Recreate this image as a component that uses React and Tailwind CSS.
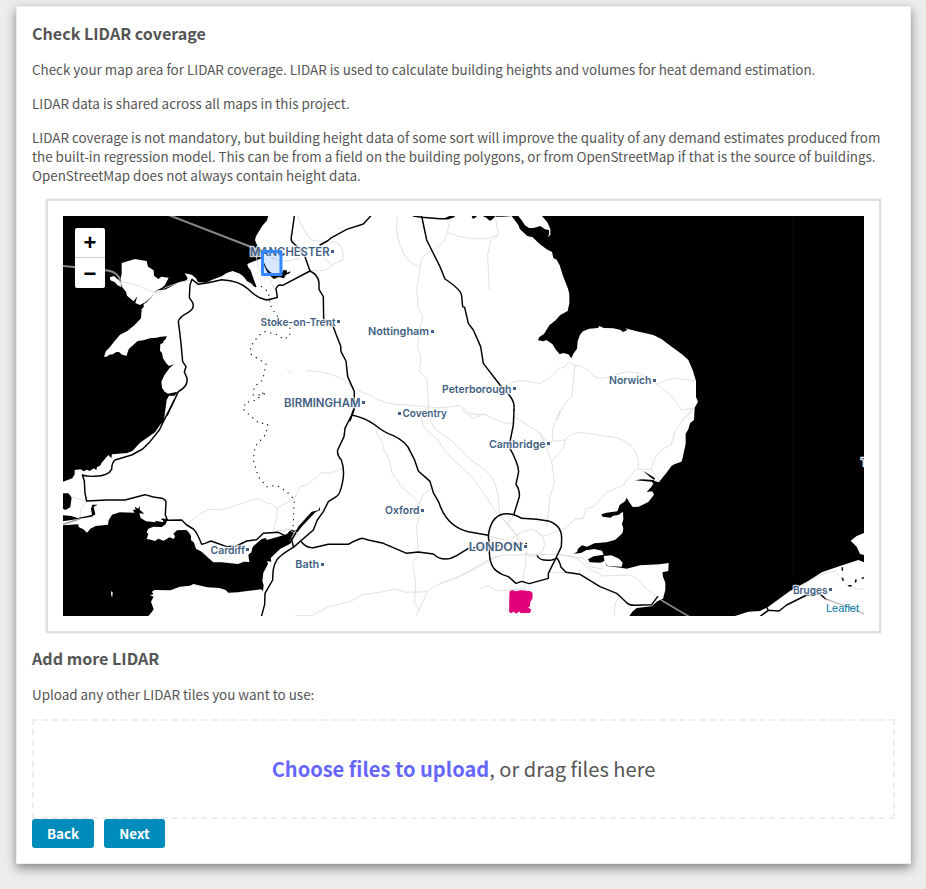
const PLACES = [
  { name: "MANCHESTER", x: 250, y: 255.7, w: 79.5, size: 11.5, dot: [332.5, 251.5] },
  { name: "Stoke-on-Trent", x: 260.5, y: 325.7, w: 75, size: 10.8, dot: [338.5, 321.5] },
  { name: "Nottingham", x: 368, y: 335.3, w: 61, size: 10.8, dot: [432.5, 331.5] },
  { name: "Peterborough", x: 442, y: 392.5, w: 69.5, size: 10.8, dot: [514.5, 388.5] },
  { name: "Norwich", x: 609, y: 384, w: 42.5, size: 10.8, dot: [654.5, 380.5] },
  { name: "BIRMINGHAM", x: 284, y: 406.7, w: 76.5, size: 11.5, dot: [363.5, 402.5] },
  { name: "Coventry", x: 402.5, y: 417.3, w: 44.5, size: 10.8, dot: [399.5, 413.5] },
  { name: "Cambridge", x: 489, y: 447.5, w: 56.5, size: 10.8, dot: [548.5, 443.5] },
  { name: "Oxford", x: 385, y: 514.3, w: 34.5, size: 10.8, dot: [422.5, 510.5] },
  { name: "Bath", x: 295.3, y: 568.3, w: 24, size: 10.8, dot: [322.5, 564.5] },
  { name: "Cardiff", x: 210.5, y: 554, w: 34.5, size: 10.8, dot: [247.5, 549.5] },
  { name: "LONDON", x: 468.8, y: 550.7, w: 53.5, size: 12, dot: [525.5, 546.5] },
  { name: "Bruges", x: 793, y: 593.7, w: 34.5, size: 10.8, dot: [830.5, 589.5] },
];

const FRAME = {
  walesNorth: "translate(40 195) scale(.333333)",
  walesSouth: "translate(40 400) scale(.333333)",
  midlands: "translate(240 210) scale(.333333)",
  southWest: "translate(240 410) scale(.333333)",
  east: "translate(440 210) scale(.333333)",
  southEast: "translate(440 410) scale(.333333)",
  flanders: "translate(680 430) scale(.333333)",
};

function Sea() {
  return (
    <g fill="#000">
      <g transform={FRAME.walesNorth}>
        <path d="M69 63H685L680 78 667 92 648 124 645 135 652 152 666 166 663 190 655 194 638 200 622 207 624 216 632 226 640 250 650 276 645 277 632 264 621 259 612 246 600 236 578 228 560 234 545 244 515 255 500 263 474 262 468 250 455 239 434 235 443 249 440 256 413 263 398 272 374 284 353 286 341 296 335 306 320 322 311 327 311 336 305 342 303 370 293 380 284 390 262 408 240 419 222 440 208 458 198 468 192 485 200 485 208 479 218 478 229 471 237 471 246 479 260 482 264 468 267 461 283 447 293 438 310 436 330 430 350 428 362 425 381 424 375 435 370 437 370 443 361 448 360 467 366 474 369 490 380 506 387 513 402 508 388 520 373 541 364 560 366 578 374 590 384 596 413 590 404 602 387 602 380 615 374 660 372 678 360 690 345 712 300 743 278 767 262 774 216 778 214 790 205 780 185 803 180 812 171 816 169 826 162 820 149 828 141 824 130 829 123 823 104 825 104 838 97 850 69 860Z" />
        <path fill="#fff" d="M245 204 275 195 285 192 301 195 320 198 324 215 341 226 342 242 355 252 364 245 386 248 375 270 365 279 350 286 335 305 318 320 300 330 286 324 292 304 281 319 261 302 258 290 248 278 240 260 245 236Z" />
        <path fill="#fff" d="M210 247 222 243 232 252 241 259 244 277 231 269 225 262 211 256Z" />
        <path d="M669 190Q674 223 700 238L722 237 731 225 740 226 741 233 751 229 750 234 737 240 732 250 716 246 702 252 688 241Q672 219 666 190Z" />
      </g>
      <g transform={FRAME.walesSouth}>
        <path d="M69 280 85 280 95 292 91 322 76 330 69 326ZM69 346 94 348 112 354 156 345 153 326 157 314 174 314 161 320 166 343 155 350 118 356 69 364Z" />
        <path d="M69 376 115 373 116 381 130 388 141 398 151 386 167 378 204 374 206 361 216 344 239 337 284 338 278 329 287 329 284 320 294 326 300 318 299 329 313 341 298 340 302 354 318 364 348 367 345 362 370 367 368 356 382 361 377 373 365 381 340 380 325 386 320 397 325 402 320 417 332 419 345 423 355 416 371 422 389 412 401 417 405 409 400 401 411 391 439 390 446 397 453 408 453 420 462 428 468 446 485 455 502 471 520 487 545 487 594 492 612 485 628 486 625 464 634 457 638 441 655 425 665 417 678 414 680 420 715 410 741 402 753 388 768 392 776 378 815 335 835 331 840 320 840 331 826 337 787 378 770 400 758 419 751 431 721 446 692 474 694 485 681 484 684 492 670 518 667 544 671 555 669 574 664 568 603 575 595 577 565 578 557 570 538 564 502 562 460 552 450 557 420 560 391 571 343 570 335 576 341 582 330 586 341 590 333 605 341 628 335 637 325 648 69 648Z" />
        <path fill="#fff" d="M213 574 218 577 217 591 214 588Z" />
      </g>
      <g transform={FRAME.east}>
        <path d="M215 18 235 45 240 58 262 78 278 82 298 101 320 118 336 126 340 144 350 149 359 166 368 195 384 236 388 253 388 280 383 303 360 316 347 331 328 346 312 372 298 381 294 391 311 394 319 390 337 402 346 417 359 433 369 429 385 433 394 445 401 430 411 416 413 394 420 374 429 364 448 356 474 354 478 348 491 354 520 355 542 360 549 366 562 360 556 355 587 363 640 375 664 387 696 411 726 433 745 450 758 480 768 513 768 561 774 575 764 593 762 630 750 640 745 658 737 671 737 701 727 748 724 755 705 762 695 767 679 789 656 817 642 812 645 804 609 782 630 801 643 810 605 808 585 811 635 815 640 821 632 833 620 846 637 844 642 854 625 876 596 890 578 891 568 877 560 863 555 874 539 885 532 904 500 908 484 913 488 920 512 923 519 917 535 915 549 905 550 928 546 942 550 955 547 970 526 989 500 997 463 1000 441 1010 426 1006 414 1016 411 1026 400 1031 423 1029 438 1021 463 1017 486 1022 491 1034 461 1039 444 1048 449 1057 482 1058 494 1052 500 1068 543 1073 560 1076 600 1066 659 1063 686 1059 685 1083 667 1087 669 1100 676 1118 676 1140 669 1166 652 1174 635 1189 590 1194 577 1205 568 1218 885 1218 925 1205 960 1203 985 1190 1050 1143 1110 1110 1145 1087 1200 1068 1255 1050 1272 1057V1035L1260 1032 1250 1010 1232 992 1250 978 1272 969V18Z" />
        <path fill="#fff" d="M235 18 245 31 255 46 267 54 281 54 301 48 315 58 327 60 327 74 322 82 331 75 331 57 322 37 306 18ZM491 1038 514 1036 537 1046 548 1058 545 1070 503 1068 494 1057Z" />
        <path d="M0 26 25 27 43 18 28 18 15 24 0 24ZM95 18 111 18 105 24 98 26ZM128 18 220 18 185 20 165 20 155 30 149 32 139 23Z" />
      </g>
    </g>
  );
}

function MinorRoads() {
  return (
    <g fill="none" stroke="#dadada" strokeWidth="2.5" strokeLinejoin="round">
      <g transform={FRAME.walesNorth}>
        <path d="M243 262Q280 262 320 283T375 278L420 262 455 255M740 521 747 526 753 536" />
        <path d="M648 178 655 220 690 255 705 285M670 165Q690 198 740 198L780 190" />
      </g>
      <g transform={FRAME.walesSouth}>
        <path d="M92 290 140 304Q118 325 121 350M440 375 475 345 505 328 545 330 625 304 655 295 680 310 695 312 712 325 765 293 780 260M712 325 711 345 701 392M700 395 745 388 765 400" />
        <path stroke="#999" strokeWidth="5" d="M69 373 120 356" />
      </g>
      <g transform={FRAME.midlands}>
        <path d="M173 18Q190 65 215 90L255 96 285 96Q315 105 308 150L275 165 240 130M275 165Q260 190 210 180M268 96 268 78M473 18Q465 65 480 105 500 160 535 168M570 125Q540 138 540 175L530 240 535 295 548 320 535 380 533 415 543 440 538 485Q555 500 562 510L566 620M630 28 622 68Q615 105 570 125M198 482Q255 482 310 508 350 545 390 555 430 585 500 585L600 594 660 587 690 612 740 614" />
        <path d="M622 68Q675 90 745 86L775 75 766 18M775 75 752 93 743 135 748 240" />
      </g>
      <g transform={FRAME.southWest}>
        <path d="M128 368Q150 345 172 370L185 395M165 365 150 392M165 617H215L265 590 330 575 365 555 430 545 465 537 500 547 562 545M180 230 200 225 245 188 270 190 310 173M402 25 410 70 427 98 430 115 450 155 455 187 485 230 520 260 540 285 541 310 530 350 535 430 518 460 527 520 523 580 537 597 530 617M540 285Q540 250 575 237M537 600 562 545Q580 525 645 505L700 480 780 435M548 0Q530 50 590 85L620 130 700 205 775 315M570 0Q560 45 610 75L655 110 680 140 735 180Q780 215 778 310M565 0 550 25" />
      </g>
      <g transform={FRAME.east}>
        <path d="M200 540Q210 510 250 512L300 520Q335 505 355 475L372 472 385 457 405 465Q440 470 460 498 480 515 540 490 575 480 610 495L650 522Q680 505 710 505L765 513M650 522 695 558 725 600 760 595Q745 620 725 635M405 465 395 560Q365 585 352 630" />
      </g>
      <g transform={FRAME.southEast}>
        <path d="M65 0 100 25 130 12 190 38 222 40M222 20 300 70 335 155 343 220 330 260 320 350M300 70 320 95 376 90 370 115 335 155M360 0 338 55 338 90M376 90Q390 65 425 68L525 82Q585 97 595 150V177M754 0 735 20 705 65 693 105Q645 120 633 178L660 215M633 178 590 178Q565 200 550 225L500 248 460 290 438 295 430 325 405 328 375 355 305 380 295 370M145 377 220 397M180 305Q185 330 240 385M235 395Q220 350 190 330M222 312 205 340M215 400Q205 375 275 358 315 370 313 405 310 440 270 440M120 535 145 527 170 542 250 537M270 440 258 425 257 465 250 500 255 540M0 520Q50 508 100 475T190 435L350 433Q405 435 430 460L450 478 490 498 570 495Q600 505 610 530L650 558M330 487H380M350 433 430 445 450 470 490 478M525 618Q518 585 535 565M225 605 235 618" />
      </g>
      <g transform={FRAME.flanders}>
        <path d="M365 470Q410 430 465 423L490 452Q510 480 552 478" />
      </g>
    </g>
  );
}

function MainRoads() {
  return (
    <g fill="none" stroke="#000" strokeWidth="4.4" strokeLinejoin="round" strokeLinecap="round">
      <g transform={FRAME.walesNorth}>
        <path d="M382 660 415 590Q445 573 441 550L433 530 438 515 428 500 423 445 419 410 415 380Q417 366 445 352 465 340 458 323L448 308 450 270 456 253 475 268 505 263 545 254Q600 257 625 283T680 315L706 309 712 307 708 280 715 271 728 271 810 228" />
      </g>
      <g transform={FRAME.walesSouth}>
        <path d="M403 0 370 65 358 90 330 125 308 147 275 165 225 180Q215 188 215 208 205 227 165 229 140 230 127 225L133 243 135 280 140 303 200 300 255 300 315 284 340 291 365 295Q377 298 378 307L376 345 382 359 366 358M382 361 425 360 440 375 460 387Q470 395 485 433L495 430 513 423 560 440 590 438 620 423 650 419 670 400 715 397 740 410 755 418 760 440" />
      </g>
      <g transform={FRAME.midlands}>
        <path d="M163 18 155 75Q150 95 162 101L177 115 195 140 210 183Q235 195 237 218L237 238 250 260 251 328 280 350 289 375 302 408 303 425 318 453 323 500 343 545 342 600 330 632M392 18 370 42 320 58 275 83 262 93 240 105M520 18 545 22 600 26 625 26 642 20M545 18 560 90 600 170 615 207Q665 240 665 258L668 290 674 292 685 340 700 360 722 410 730 460 780 525Q820 563 822 585V600" />
      </g>
      <g transform={FRAME.southWest}>
        <path d="M340 0 335 15 315 55 312 80 293 120Q290 135 304 150 315 180 308 215 300 255 290 259L265 275 250 305 232 330 220 360 160 412Q112 440 108 455 98 470 98 510L75 550 74 583 65 617M335 15Q375 23 405 45 430 66 460 77 500 95 511 125L523 148 535 183 570 214 580 248 597 278Q620 350 685 365L745 376M185 397Q200 415 220 413L265 403 325 403Q355 386 368 385L385 390 430 400 500 430 535 426 580 432Q610 460 650 437L685 415" />
        <path strokeDasharray="2 10" d="M690 414 865 400" />
      </g>
      <g transform={FRAME.southEast}>
        <path d="M222 0 220 45 207 110Q235 160 236 185L228 223Q240 240 238 260L222 312M145 377Q152 320 190 312 215 308 245 325L290 328 325 333Q365 345 365 385L364 410 345 450 325 490 325 505L268 521 245 514 228 520 205 500Q160 487 153 458 147 440 148 410L145 377M292 438Q300 454 335 450L352 445Q362 462 362 470L378 487 420 493 480 530 530 550 558 576Q565 586 585 586L635 584 653 560" />
        <path stroke="#888" strokeWidth="5" strokeLinecap="butt" d="M663 570 748 620" />
      </g>
      <g transform={FRAME.flanders}>
        <path d="M242 558 265 541 297 543 320 525 380 495 420 492 437 507M258 528 265 541" />
        <path stroke="#999" d="M437 507 515 535 555 553" />
        <path strokeDasharray="10 20" strokeLinecap="butt" d="M487 412 487 425M487 443 490 453M528 448 526 461M505 467 515 467M545 445 552 443" />
      </g>
      <g transform={FRAME.walesNorth} stroke="#888" strokeWidth="6" strokeLinecap="butt">
        <path d="M388 61 652 163M69 213 110 217M193 226Q235 228 242 261" />
      </g>
    </g>
  );
}

function Borders() {
  return (
    <g fill="none" stroke="#111" strokeWidth="4" strokeLinecap="round" strokeDasharray=".1 17.5">
      <g transform={FRAME.midlands}>
        <path d="M65 230 85 245 90 283 108 315 150 353 149 378 131 388 112 374 75 365 55 377 32 410V432L78 462 68 510 43 530 40 555 72 555 74 543 50 570 15 578 13 600" />
      </g>
      <g transform={FRAME.southWest}>
        <path d="M12 0 55 38 83 42 78 72 45 110 40 150 55 200 80 230 110 226 140 245 163 268 159 360" />
      </g>
    </g>
  );
}

function CoverageMap() {
  return (
    <div className="relative h-[400px] w-[801px] overflow-hidden bg-white">
      <svg className="block h-full w-full" viewBox="63 216 801 400">
        <Sea />
        <MinorRoads />
        <MainRoads />
        <Borders />
        <path stroke="#060606" d="M792.5 216V578" />
        <g
          fontFamily="Inter, 'Open Sans', sans-serif"
          fontWeight="600"
          fill="#435f83"
          stroke="#fff"
          strokeOpacity=".8"
          strokeWidth="2.4"
          strokeLinejoin="round"
          paintOrder="stroke"
        >
          {PLACES.map((p) => (
            <g key={p.name}>
              <text x={p.x} y={p.y} fontSize={p.size} textLength={p.w} lengthAdjust="spacingAndGlyphs">
                {p.name}
              </text>
              <rect x={p.dot[0] - 1.5} y={p.dot[1] - 1.5} width="3" height="3" />
            </g>
          ))}
          <text x="861" y="466" fontSize="10.5" strokeOpacity="1">T</text>
        </g>
        <rect x="262.5" y="251.5" width="18.5" height="23" fill="#3388ff" fillOpacity=".2" stroke="#3388ff" strokeWidth="3" strokeLinejoin="round" />
        <path
          transform={FRAME.southEast}
          fill="#e0007a"
          stroke="#e0007a"
          strokeWidth="3"
          strokeLinejoin="round"
          d="M210 544 220 542 226 545 244 542 270 545 276 548 276 565 270 575 268 589 262 594 271 598 270 607 242 608 238 602 232 608 225 608 220 602 216 608 209 606Z"
        />
      </svg>
      <div className="absolute top-3 left-3 flex w-[30px] flex-col overflow-hidden rounded-[2px] bg-white font-['Liberation_Sans',sans-serif] text-[22px] font-bold text-black">
        <button className="h-[30px] border-b border-[#ccc] leading-[29px]">+</button>
        <button className="h-[30px] leading-[29px]">−</button>
      </div>
      <div className="absolute right-0 bottom-0 bg-white/40 px-[5px] font-['Liberation_Sans',sans-serif] text-[11px] leading-4 text-[#0078a8]">
        Leaflet
      </div>
    </div>
  );
}

export default function App() {
  return (
    <div className="h-[889px] overflow-hidden bg-[#ededed] px-4 pt-1.5 font-['Noto_Sans_CJK_SC',sans-serif] text-[13.42px] leading-[19px] text-[#555]">
      <main className="h-[858px] w-[895px] border border-[#eee] bg-white px-[15px] pt-[15px] shadow-[0_4px_10px_rgba(0,0,0,0.45)]">
        <h2 className="mb-[15px] h-[23px] text-[16.08px] leading-[23px] font-bold">Check LIDAR coverage</h2>
        <p className="mb-[15px] whitespace-nowrap">
          Check your map area for LIDAR coverage. LIDAR is used to calculate building heights and volumes for heat demand estimation.
        </p>
        <p className="mb-[15px]">LIDAR data is shared across all maps in this project.</p>
        <p className="mb-3.5 whitespace-nowrap">
          LIDAR coverage is not mandatory, but building height data of some sort will improve the quality of any demand estimates produced from
          <br />
          the built-in regression model. This can be from a field on the building polygons, or from OpenStreetMap if that is the source of buildings.
          <br />
          OpenStreetMap does not always contain height data.
        </p>
        <div className="ml-[14px] h-[434px] w-[835px] border-2 border-[#e0e0e0] p-[15px] shadow-[0_0_2px_rgba(0,0,0,0.15)]">
          <CoverageMap />
        </div>
        <h2 className="mt-3.5 mb-[15px] h-[23px] text-[16.08px] leading-[23px] font-bold">Add more LIDAR</h2>
        <p className="mb-[15px]">Upload any other LIDAR tiles you want to use:</p>
        <div className="flex h-[100px] w-[863px] items-center justify-center border-2 border-dashed border-[#eee] text-[20.08px] leading-[30px]">
          <span className="font-bold text-[#6666ff]">Choose files to upload</span>
          <span>, or drag files here</span>
        </div>
        <div className="flex gap-2.5 font-bold text-white">
          <button className="h-[29px] w-[62px] rounded-[3px] bg-[#008cba]">Back</button>
          <button className="h-[29px] w-[61px] rounded-[3px] bg-[#008cba]">Next</button>
        </div>
      </main>
    </div>
  );
}
